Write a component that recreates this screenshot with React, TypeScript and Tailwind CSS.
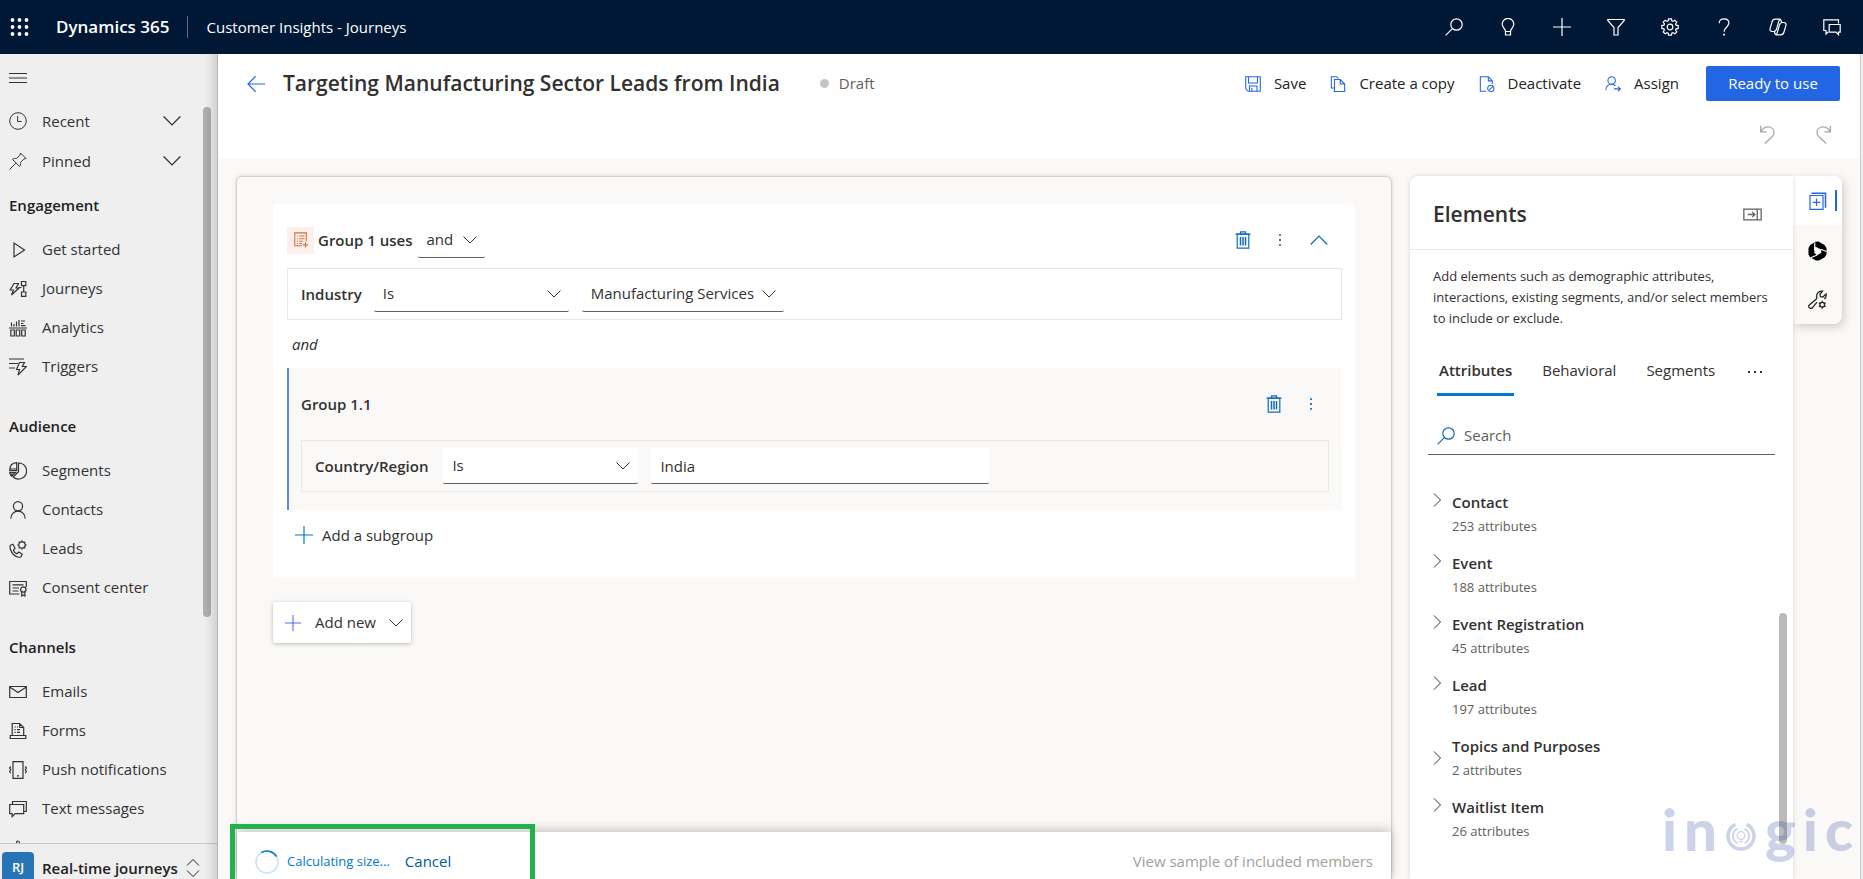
import type { ReactNode } from 'react';

type IconProps = { children: ReactNode; size?: number; className?: string; width?: number };

function Icon({ children, size = 18, className = '', width = 1.2 }: IconProps) {
  return (
    <svg
      width={size}
      height={size}
      viewBox="0 0 18 18"
      fill="none"
      stroke="currentColor"
      strokeWidth={width}
      className={`shrink-0 ${className}`}
      aria-hidden="true"
    >
      {children}
    </svg>
  );
}

const GEAR =
  'M7.6 .8h2.8l.4 2.1 1.2.5 1.8-1.2 2 2-1.2 1.8.5 1.2 2.1.4v2.8l-2.1.4-.5 1.2 1.2 1.8-2 2-1.8-1.2-1.2.5-.4 2.1H7.6l-.4-2.1-1.2-.5-1.8 1.2-2-2 1.2-1.8-.5-1.2L.8 10.4V7.6l2.1-.4.5-1.2-1.2-1.8 2-2L6 3.400l1.200-.5z';

const COPILOT_HALF =
  'M12.800 4.600 12.300 3C11.900 1.700 11.400 1.200 10.200 1.200H6.300C4.500 1.200 3.500 2.200 3 4L1.200 10.200c-.6 2.100.2 3.300 2 3.300h1.600c1.400 0 2.200-.7 2.700-2.200l2-7.200c.4-1.500.7-2.600 1.800-2.800';

const icons = {
  search: (
    <>
      <circle cx="11.500" cy="6.500" r="5.700" />
      <path d="M7.400 10.600.6 17.400" />
    </>
  ),
  bulb: (
    <path d="M6.500 13.500c0-3-3.300-4-3.300-7.300a5.800 5.800 0 0 1 11.600 0c0 3.300-3.300 4.300-3.300 7.300zM6.500 13.500V17h5v-3.500" />
  ),
  plus: <path d="M9 0v18M0 9h18" />,
  filter: <path d="M.8 1.500h16.400v1l-6.200 7V17H7V9.500l-6.200-7z" />,
  gear: (
    <>
      <path d={GEAR} />
      <circle cx="9" cy="9" r="2.800" />
    </>
  ),
  help: (
    <>
      <path d="M4.200 5.200C4.200 2.300 6.200.8 9 .8s4.900 1.700 4.900 4.300c0 3.800-4.800 4-4.800 8.700" />
      <path d="M9.100 15.800v1.800" strokeWidth="1.800" />
    </>
  ),
  copilot: (
    <>
      <path d={COPILOT_HALF} />
      <path d={COPILOT_HALF} transform="rotate(180 9 9)" />
      <path d="M12.500 4.500h2.700M2.800 13.500h2.700" />
    </>
  ),
  feedback: (
    <>
      <path d="M15.500 5.500V1.800H.8v10.700H3V16l2.200-2.200" />
      <path d="M6.200 6.500h11v7.700h-1.700v2.500L13 14.200H6.200z" />
    </>
  ),
  clock: (
    <>
      <circle cx="9" cy="9" r="8.300" />
      <path d="M8.600 4v5.500h4" />
    </>
  ),
  pin: <path d="m11.500 1 5.500 5.500-2.200.6-3.300 3.300c.3 1.700 0 3-.9 4.100L3.500 7.400c1.100-.9 2.400-1.200 4.100-.9l3.300-3.300zM6.800 11.200.5 17.500" />,
  play: <path d="M5 2v14L15.500 9z" />,
  journeys: (
    <path d="M5 3.500h4.500L7 8h3L2.500 15l2-5H1.200zM12.500 1.500h4.300v4.200h-4.300zM12.500 12h4.300v4.300h-4.300zM14.700 5.700V12M9.500 7.500h3" />
  ),
  analytics: (
    <path d="M2.500 3.500v4M5 5v2.500M7.500 2.500v5M10 1v6.500M12 2h4M12 4.500h2.500M12 6.700h4.500M0 9h18M1.800 11h3.500v6H1.800zM7.200 11h3.500v6H7.200zM12.700 11h3.500v6h-3.500z" />
  ),
  triggers: (
    <>
      <path d="M0 1h15M0 5.500h9M0 10h6" />
      <path d="M10.500 4.500h5l-2.200 4h4L9 17.200l1.500-5.700H7.500z" />
    </>
  ),
  segments: (
    <>
      <path d="M9.500 1a8 8 0 1 1-5.200 14L9.500 9.700z" />
      <path d="M7.700.7v7.800H.7C.7 4 3.500 1 7.700.7zM.7 10.300h6l-4 4C1.500 13 .9 11.800.7 10.300zM1 7h6.500M1.500 12.200h3" />
    </>
  ),
  person: (
    <>
      <circle cx="9" cy="5.200" r="4.600" />
      <path d="M1.800 17.600c.2-4.600 3.300-7.500 7.200-7.500s7 2.900 7.200 7.500" />
    </>
  ),
  leads: (
    <>
      <path d="M1.500 5.200 3.800 4.300l2.300 4-1.700 1.900c.6 1.700 1.800 2.900 3.500 3.500l2-1.600 3.300 2.200-1.200 2.500c-1.500 1-4.800.3-7.500-2.300S.2 7 1.500 5.200z" />
      <circle cx="13" cy="5" r="3.200" />
      <path d="M13 .3v1.500M13 8.200v1.500M8.300 5h1.500M16.200 5h1.500M9.700 1.700l1 1M15.300 7.300l1 1M16.300 1.700l-1 1M10.700 7.300l-1 1" />
    </>
  ),
  consent: (
    <>
      <path d="M10.500 15H.7V2.500h16.600V8M3.500 5.800h11M3.500 9h6.500M3.500 12h6" />
      <circle cx="14.300" cy="10.500" r="2.700" />
      <path d="M12.700 12.700V17l1.600-1 1.600 1v-4.300" />
    </>
  ),
  mail: <path d="M.7 3.500h16.600v11H.7zM.7 4l8.300 5.500L17.300 4" />,
  forms: (
    <path d="M3.200 13.500V1.500h7.500l4 4v8M10.700 1.500v4h4M1.200 13.500h15.600v3H1.200zM5.500 5h1.200M8 5h1M5.500 7.700h1.200M8 7.700h3M5.500 10.400h1.200M8 10.400h3" />
  ),
  push: (
    <>
      <path d="M4 .7h10v16.600H4zM8 14.800h2" />
      <path d="M1.800 5.500.5 7l1.300 1.800L.5 10.500l1.300 1.700M16.200 5.500l1.300 1.500-1.300 1.800 1.300 1.700-1.300 1.700" />
    </>
  ),
  chat: <path d="M3.500 4.500V1.500h13.800v10h-2.600M.7 4.500h14v9.200H6.200l-3 3v-3H.7z" />,
  bell: <path d="M4 14c0-7 1.500-9.500 5-9.500s5 2.500 5 9.500M7.500 4.200C7.500 2.500 8 2 9 2s1.500.5 1.500 2.200" />,
  save: <path d="M.8.8h16.400v16.400H3.500L.8 14.500zM4 .8v7h10v-7M5 17v-5.700h8.500V17M7.700 13.500V17" />,
  copy: <path d="M4.500 13.500h-3V.8h6l2 2M5 4h6.500l5 5v8.500H5zM11.500 4v5h5" />,
  deactivate: (
    <>
      <path d="M8 17.200H1.500V.8h9l4.500 4.700V9M10.500.8v4.700H15" />
      <circle cx="13.300" cy="14" r="3.500" />
      <path d="m11 16.300 4.700-4.600" />
    </>
  ),
  assign: (
    <>
      <circle cx="7.500" cy="5" r="4.200" />
      <path d="M.8 16c.3-4 3-6.800 6.700-6.800 2 0 3.300.8 4.300 2M10 14.500h7M14.500 12l2.700 2.500-2.700 2.700" />
    </>
  ),
  trash: (
    <>
      <path d="M1.500 3.200h15M6.500 3V.8h5V3" />
      <path d="M3.200 3.200h11.600v14H3.200z" />
      <path d="M6.500 6v8.500M9 6v8.500M11.500 6v8.500" strokeWidth="1.500" />
    </>
  ),
  dotsV: <path d="M9 2.500v2M9 8v2M9 13.500v2" strokeWidth="2" />,
  undo: <path d="M2.500.8v5.700h5.700M2.500 6.300C4.800 3 6.800 1.800 9.300 1.800c3.400 0 5.900 2.200 5.900 5.200 0 1.800-.8 3-2 4.200L6.500 17.500" />,
  redo: <path d="M15.500.8v5.700H9.800M15.500 6.300C13.200 3 11.200 1.800 8.700 1.800c-3.400 0-5.900 2.200-5.900 5.200 0 1.800.8 3 2 4.200l6.700 6.300" />,
  back: <path d="M18 9H1M8.700 1.200 1 9l7.700 7.800" />,
  collapse: <path d="M.8 4h16.400v10H.8zM13.500 4v10M4.500 9h6.700M8.700 6.500 11.200 9l-2.500 2.500" />,
  elements: (
    <>
      <path d="M1 3.500h13v13.800H1zM7.500 6.500v7.500M3.700 10.300h7.600" />
      <path d="M2.500 1.200h14v14.500" strokeWidth="1.500" />
    </>
  ),
  wrench: (
    <>
      <path d="M8.500 8 1.500 14c-1.200 1.200-1.100 2.200 0 3 1.100.8 2.200.6 3-.5l4-5M8.500 8.100C7.300 3.800 9.800.6 13.800 1l-2.500 3 .5 2.300 2.300.3 3-2.900c.5 2.200-.2 3.800-1.700 4.900" />
      <circle cx="13.500" cy="14" r="2.200" />
      <path d="M13.500 10.300v1.500M13.500 16.200v1.500M10.300 12.200l1.300.7M15.400 15.100l1.300.7M16.700 12.200l-1.300.7M11.600 15.100l-1.300.7" />
    </>
  ),
};

type IconName = keyof typeof icons;

function Chevron({ dir = 'down', className = '', size = 14 }: { dir?: 'down' | 'up' | 'right'; className?: string; size?: number }) {
  const d = { down: 'M.5 3.500 7 10l6.500-6.500', up: 'M.5 10.500 7 4l6.500 6.500', right: 'M4 .5 10.500 7 4 13.500' }[dir];
  return (
    <svg width={size} height={size} viewBox="0 0 14 14" fill="none" stroke="currentColor" className={`shrink-0 ${className}`} aria-hidden="true">
      <path d={d} />
    </svg>
  );
}

const NAV_GROUPS: { title: string; items: [IconName, string][] }[] = [
  {
    title: 'Engagement',
    items: [
      ['play', 'Get started'],
      ['journeys', 'Journeys'],
      ['analytics', 'Analytics'],
      ['triggers', 'Triggers'],
    ],
  },
  {
    title: 'Audience',
    items: [
      ['segments', 'Segments'],
      ['person', 'Contacts'],
      ['leads', 'Leads'],
      ['consent', 'Consent center'],
    ],
  },
  {
    title: 'Channels',
    items: [
      ['mail', 'Emails'],
      ['forms', 'Forms'],
      ['push', 'Push notifications'],
      ['chat', 'Text messages'],
    ],
  },
];

const TOP_ACTIONS: [IconName, string][] = [
  ['search', 'Search'],
  ['bulb', 'Assistant'],
  ['plus', 'New'],
  ['filter', 'Advanced find'],
  ['gear', 'Settings'],
  ['help', 'Help'],
  ['copilot', 'Copilot'],
  ['feedback', 'Feedback'],
];

const COMMANDS: [IconName, string][] = [
  ['save', 'Save'],
  ['copy', 'Create a copy'],
  ['deactivate', 'Deactivate'],
  ['assign', 'Assign'],
];

const ATTRIBUTES = [
  { name: 'Contact', count: 253 },
  { name: 'Event', count: 188 },
  { name: 'Event Registration', count: 45 },
  { name: 'Lead', count: 197 },
  { name: 'Topics and Purposes', count: 2, centered: true },
  { name: 'Waitlist Item', count: 26 },
];

function TopBar() {
  return (
    <header className="flex h-[54px] shrink-0 items-center bg-[#001736] text-white">
      <button aria-label="App launcher" className="ml-[10px]">
        <svg width="20" height="18" viewBox="0 0 20 18" fill="currentColor" aria-hidden="true">
          {[2.5, 9.5, 16.5].map((x) => [2, 9, 16].map((y) => <circle key={`${x}-${y}`} cx={x} cy={y} r="1.900" />))}
        </svg>
      </button>
      <a href="#" className="ml-[26px] text-[17px] font-semibold">
        Dynamics 365
      </a>
      <span className="mx-[18px] h-[22px] w-px bg-[#5b6b82]" />
      <a href="#">Customer Insights - Journeys</a>
      <div className="mr-[22px] ml-auto flex gap-9">
        {TOP_ACTIONS.map(([icon, label]) => (
          <button key={label} aria-label={label}>
            <Icon>{icons[icon]}</Icon>
          </button>
        ))}
      </div>
    </header>
  );
}

function Sidebar() {
  return (
    <nav className="relative flex w-[218px] shrink-0 flex-col overflow-hidden border-r border-[#b5b5b5] bg-[#efefef] text-[#333]">
      <button aria-label="Toggle navigation" className="mt-[15px] ml-[9px] h-[18px] w-[18px]">
        <Icon>
          <path d="M0 4.500h18M0 9h18M0 13.500h18" />
        </Icon>
      </button>
      <div className="mt-[14px] min-h-0 flex-1 overflow-hidden">
        {([['clock', 'Recent'], ['pin', 'Pinned']] as [IconName, string][]).map(([icon, label]) => (
          <button key={label} className="flex h-10 w-full items-center pl-[9px] text-left">
            <Icon width={1}>{icons[icon]}</Icon>
            <span className="ml-[15px] flex-1">{label}</span>
            <Chevron size={18} className="mr-9" />
          </button>
        ))}
        {NAV_GROUPS.map((group, i) => (
          <section key={group.title} className={i === 0 ? '' : 'mt-4'}>
            <h2 className="mb-px flex h-12 items-center pl-[9px] font-semibold text-[#222]">{group.title}</h2>
            {group.items.map(([icon, label]) => (
              <a key={label} href="#" className="flex h-[39px] items-center gap-[15px] pl-[9px]">
                <Icon>{icons[icon]}</Icon>
                {label}
              </a>
            ))}
          </section>
        ))}
        <a href="#" aria-label="More channels" className="flex h-[39px] items-center pl-[9px]">
          <Icon>{icons.bell}</Icon>
        </a>
      </div>
      <button className="flex h-[36px] shrink-0 items-start overflow-hidden border-t border-[#c8c8c8] pt-2 pl-[2px] font-semibold text-[#222]">
        <span className="flex h-8 w-8 shrink-0 items-center justify-center rounded-sm bg-[#2775b6] text-[13px] text-white">RJ</span>
        <span className="ml-2 flex h-8 items-center">Real-time journeys</span>
        <svg width="14" height="20" viewBox="0 0 14 20" fill="none" stroke="currentColor" className="mt-[6px] ml-2 shrink-0" aria-hidden="true">
          <path d="M1 7.500 7 1.500l6 6M1 12.500l6 6 6-6" />
        </svg>
      </button>
      <div className="absolute top-[53px] right-[6px] h-[510px] w-2 rounded-full bg-[#adadad]" />
      <div className="pointer-events-none absolute inset-y-0 right-0 w-3 bg-linear-to-l from-black/12 to-transparent" />
    </nav>
  );
}

function PageHeader() {
  return (
    <div className="h-[104px] shrink-0 bg-white pt-3 pr-[20px] pl-[29px]">
      <div className="flex h-[35px] items-center">
        <button aria-label="Back" className="text-[#2266e3]">
          <Icon>{icons.back}</Icon>
        </button>
        <h1 className="ml-[18px] text-[21px] font-semibold whitespace-nowrap text-[#323130]">
          Targeting Manufacturing Sector Leads from India
        </h1>
        <span className="ml-10 h-[9px] w-[9px] rounded-full bg-[#c4c4c4]" />
        <span className="ml-[10px] text-[#605e5c]">Draft</span>
        <div className="ml-auto flex gap-6 text-[#222]">
          {COMMANDS.map(([icon, label]) => (
            <button key={label} className="flex items-center gap-[13px] whitespace-nowrap">
              <Icon size={16} className="text-[#2266e3]">
                {icons[icon]}
              </Icon>
              {label}
            </button>
          ))}
        </div>
        <button className="ml-[27px] h-[35px] w-[134px] rounded-xs bg-[#2266e3] text-white">Ready to use</button>
      </div>
      <div className="mt-[24px] mr-[7px] flex justify-end gap-[37px] text-[#a6a6a6]">
        <button aria-label="Undo">
          <Icon size={19}>{icons.undo}</Icon>
        </button>
        <button aria-label="Redo">
          <Icon size={19}>{icons.redo}</Icon>
        </button>
      </div>
    </div>
  );
}

function Dropdown({ label, value, className }: { label: string; value: string; className: string }) {
  return (
    <div className={`relative flex h-9 items-center rounded-xs border-b border-[#605e5c] bg-white ${className}`}>
      <select aria-label={label} defaultValue={value} className="h-full w-full appearance-none bg-transparent pl-[9px] outline-none">
        <option>{value}</option>
      </select>
      <Chevron className="pointer-events-none absolute right-2" />
    </div>
  );
}

function SegmentBuilder() {
  return (
    <section className="flex min-w-0 flex-1 flex-col rounded-t-md border border-b-0 border-[#d2d0ce] shadow-[0_0_4px_rgba(0,0,0,0.15)]">
      <div className="min-h-0 flex-1 pt-[27px] pr-[36px] pl-[36px]">
        <div className="h-[374px] rounded-xs bg-white pt-[18px] pr-[13px] pl-[14px]">
          <div className="flex h-9 items-center pr-[14px]">
            <span className="flex h-[27px] w-[27px] items-center justify-center bg-[#fdefee] text-[#d86f35]">
              <Icon size={16}>
                <path d="M10 15.500H2V1h13v9.500M4.500 4.500h1M7 4.500h6M4.500 7.500h1M7 7.500h6M4.500 10.500h1M7 10.500h4M4.500 13h1M7 13h3M14 11.500v6M11 14.500h6" />
              </Icon>
            </span>
            <h2 className="mr-[5px] ml-1 font-semibold">Group 1 uses</h2>
            <Dropdown label="Group 1 operator" value="and" className="w-[67px]" />
            <div className="ml-auto flex items-center gap-5 text-[#0f6cbd]">
              <button aria-label="Delete group 1">
                <Icon>{icons.trash}</Icon>
              </button>
              <button aria-label="More options for group 1">
                <Icon size={16}>{icons.dotsV}</Icon>
              </button>
              <button aria-label="Collapse group 1" className="ml-[2px]">
                <Chevron dir="up" size={18} />
              </button>
            </div>
          </div>

          <div className="mt-[10px] flex h-[52px] items-center border border-[#e8e8e8] pl-[13px]">
            <span className="font-semibold">Industry</span>
            <Dropdown label="Industry operator" value="Is" className="ml-3 w-[195px]" />
            <Dropdown label="Industry value" value="Manufacturing Services" className="ml-[13px] w-[202px]" />
          </div>

          <p className="flex h-12 items-center pl-[5px] italic">and</p>

          <div className="h-[142px] border-l-2 border-[#5b8ae4] bg-[#faf9f8] pt-[18px] pr-[13px] pl-3">
            <div className="flex h-9 items-center pr-[10px]">
              <h3 className="font-semibold">Group 1.1</h3>
              <div className="ml-auto flex items-center gap-5 text-[#0f6cbd]">
                <button aria-label="Delete group 1.1">
                  <Icon>{icons.trash}</Icon>
                </button>
                <button aria-label="More options for group 1.1">
                  <Icon size={16}>{icons.dotsV}</Icon>
                </button>
              </div>
            </div>
            <div className="mt-[18px] flex h-[52px] items-center border border-[#e8e8e8] pl-[13px]">
              <label htmlFor="country" className="font-semibold">
                Country/Region
              </label>
              <Dropdown label="Country/Region operator" value="Is" className="ml-[15px] w-[195px]" />
              <input
                id="country"
                defaultValue="India"
                className="ml-[13px] h-9 w-[338px] rounded-xs border-b border-[#605e5c] bg-white px-[9px] outline-none"
              />
            </div>
          </div>

          <button className="mt-[15px] flex h-5 items-center gap-[9px] pl-[8px] text-[#323130]">
            <Icon className="text-[#0078d4]">{icons.plus}</Icon>
            Add a subgroup
          </button>
        </div>

        <button className="mt-6 flex h-[41px] w-[138px] items-center rounded-xs bg-white pl-3 shadow-[0_1px_4px_rgba(0,0,0,0.25)]">
          <Icon size={16} className="text-[#4f6fe0]">
            {icons.plus}
          </Icon>
          <span className="mr-auto ml-[14px]">Add new</span>
          <Chevron className="mr-2" />
        </button>
      </div>

      <footer className="relative flex h-[47px] shrink-0 items-center bg-white px-[18px] pt-3 shadow-[0_-2px_10px_rgba(0,0,0,0.22)]">
        <svg width="24" height="24" viewBox="0 0 24 24" fill="none" strokeWidth="1.500" aria-hidden="true">
          <circle cx="12" cy="12" r="11" stroke="#c7e0f4" />
          <path d="M6.500 2.500A11 11 0 0 1 21.500 6.500" stroke="#0078d4" />
        </svg>
        <span className="ml-2 text-[13px] text-[#0078d4]">Calculating size...</span>
        <button className="ml-[15px] text-[#005a9e]">Cancel</button>
        <button disabled className="ml-auto text-[#a19f9d]">
          View sample of included members
        </button>
        <div className="pointer-events-none absolute -top-2 bottom-0 -left-[7px] w-[305px] border-5 border-b-0 border-[#22b14c]" />
      </footer>
    </section>
  );
}

function ElementsPanel() {
  return (
    <aside className="relative ml-[18px] flex w-[383px] shrink-0 flex-col rounded-tl-lg bg-white text-[#323130] shadow-[0_0_5px_rgba(0,0,0,0.14)]">
      <div className="flex h-[74px] items-center border-b border-[#edebe9] pt-1 pr-[31px] pl-[23px]">
        <h2 className="text-[21px] font-semibold">Elements</h2>
        <button aria-label="Collapse pane" className="ml-auto text-[#605e5c]">
          <Icon size={19}>{icons.collapse}</Icon>
        </button>
      </div>
      <p className="px-[23px] pt-4 text-[13px] leading-[21px]">
        Add elements such as demographic attributes,
        <br />
        interactions, existing segments, and/or select members
        <br />
        to include or exclude.
      </p>
      <div role="tablist" className="mt-[19px] flex h-[48px] items-center pr-[31px] pl-[27px]">
        <button role="tab" aria-selected="true" className="h-full border-b-3 border-[#0078d4] px-[2px] font-semibold">
          Attributes
        </button>
        <button role="tab" aria-selected="false" className="ml-7 h-full pb-[3px]">
          Behavioral
        </button>
        <button role="tab" aria-selected="false" className="ml-[30px] h-full pb-[3px]">
          Segments
        </button>
        <button aria-label="More tabs" className="ml-auto">
          <svg width="14" height="4" viewBox="0 0 14 4" fill="currentColor" aria-hidden="true">
            <path d="M0 1h2v2H0zM6 1h2v2H6zM12 1h2v2h-2z" />
          </svg>
        </button>
      </div>
      <label className="mt-[21px] mr-[18px] ml-[18px] flex h-[38px] items-center gap-[9px] border-b border-[#605e5c] pl-[9px]">
        <Icon className="text-[#0f6cbd]">{icons.search}</Icon>
        <input type="search" placeholder="Search" aria-label="Search attributes" className="w-full outline-none placeholder:text-[#605e5c]" />
      </label>
      <ul className="mt-[35px]">
        {ATTRIBUTES.map(({ name, count, centered }) => (
          <li key={name} className="h-[61px]">
            <button className={`flex gap-2 pl-5 text-left ${centered ? 'items-center' : 'items-start'}`}>
              <Chevron dir="right" className={centered ? '' : 'mt-[3px]'} />
              <span>
                <span className="block leading-6 font-semibold">{name}</span>
                <span className="block text-[13px] leading-6 text-[#605e5c]">{count} attributes</span>
              </span>
            </button>
          </li>
        ))}
      </ul>
      <div className="absolute top-[437px] right-[6px] h-[231px] w-2 rounded-full bg-[#bababa]" />
    </aside>
  );
}

function SideRail() {
  return (
    <div className="mr-[18px] flex h-[148px] w-[49px] shrink-0 flex-col rounded-r-lg bg-[#faf9f8] shadow-[2px_3px_10px_rgba(0,0,0,0.18)]">
      <button aria-label="Elements" className="flex h-[49px] items-center justify-between rounded-tr-lg bg-white pr-[5px] pl-4 text-[#2266e3]">
        <Icon>{icons.elements}</Icon>
        <span className="h-[21px] w-[2px] bg-[#2266e3]" />
      </button>
      <button aria-label="Copilot" className="flex h-[52px] items-center pl-[15px] text-black">
        <svg width="19" height="20" viewBox="0 0 19 20" aria-hidden="true">
          <path d="M7.500.8 10.500.6l6 3.300 2 3v6.600l-2 3.100-5.600 2.900H8l-6-3.200-1.500-3V7l1.700-3z" fill="#000" />
          <path d="M7.200 5.500 13 8.500l.3 3.300-4.300 2.500-2.800-2.500z" fill="#faf9f8" />
          <path d="M6.600 9.500 6.800 1.500M12.500 8.200l6 2.300M9.200 14l-6.500 2.800" stroke="#faf9f8" strokeWidth="1.200" fill="none" />
        </svg>
      </button>
      <button aria-label="Settings" className="flex h-11 items-center pl-[15px] text-[#222]">
        <Icon size={19}>{icons.wrench}</Icon>
      </button>
    </div>
  );
}

function Watermark() {
  return (
    <div className="pointer-events-none absolute right-[10px] bottom-[15px] flex items-baseline gap-[7px] font-[Lato] text-[58px] leading-[70px] font-black text-[#2b429c]/24">
      <span>i</span>
      <span>n</span>
      <svg width="30" height="30" viewBox="0 0 30 30" fill="none" stroke="currentColor" className="mx-[2px]" aria-hidden="true">
        <path d="M9.500 3.300a13 13 0 1 0 11 0" strokeWidth="3.500" />
        <path d="M11.500 7.800a8 8 0 0 0 0 14.400M18.500 7.800a8 8 0 0 1 0 14.400" strokeWidth="1.800" />
        <circle cx="15" cy="14.500" r="3.800" strokeWidth="1.300" />
        <path d="M13 20.500h4" strokeWidth="1.300" />
      </svg>
      <span>g</span>
      <span>i</span>
      <span>c</span>
    </div>
  );
}

export default function App() {
  return (
    <div className="relative flex h-screen flex-col overflow-hidden bg-[#efefef] font-['Open_Sans',sans-serif] text-[15px] text-[#323130]">
      <TopBar />
      <div className="flex min-h-0 flex-1">
        <Sidebar />
        <main className="mr-[2px] flex min-w-0 flex-1 flex-col border-r border-[#c8c8c8] bg-[#faf9f8]">
          <PageHeader />
          <div className="flex min-h-0 flex-1 pt-[18px] pl-[18px]">
            <SegmentBuilder />
            <ElementsPanel />
            <SideRail />
          </div>
        </main>
      </div>
      <Watermark />
    </div>
  );
}
